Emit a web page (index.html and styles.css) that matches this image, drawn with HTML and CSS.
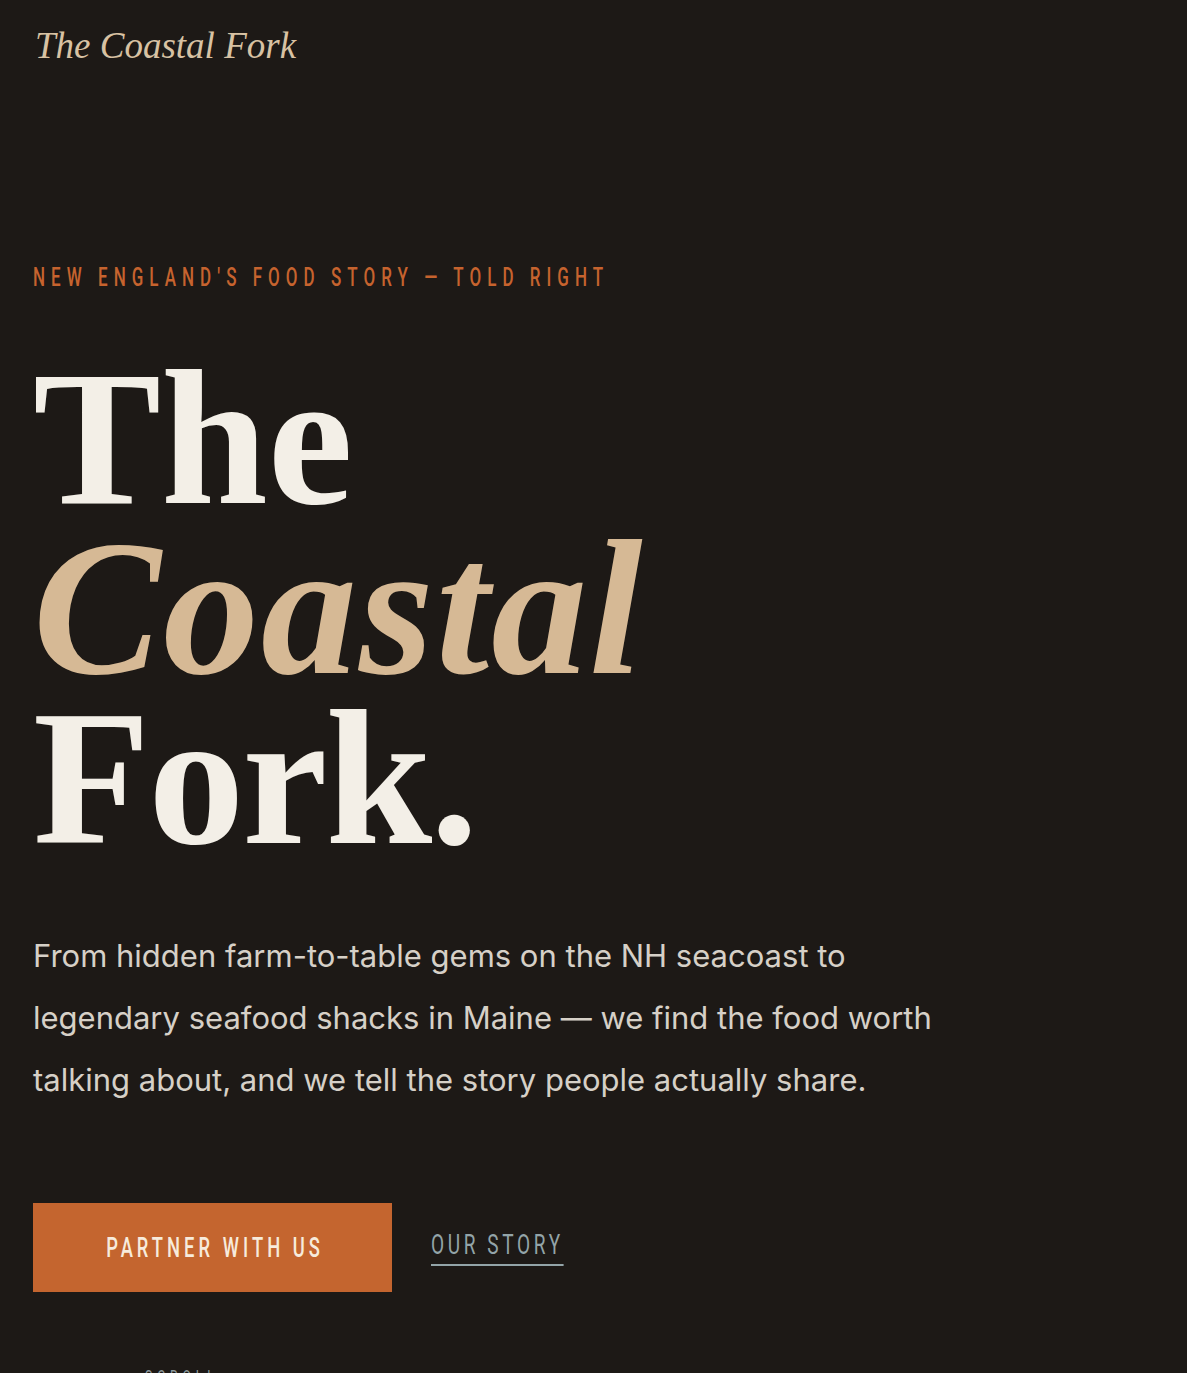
FILE: index.html
```html
<!DOCTYPE html>
<html lang="en">
<head>
<meta charset="utf-8">
<title>The Coastal Fork</title>
<link rel="stylesheet" href="styles.css">
</head>
<body>
<div class="page">
  <header class="site-header">
    <a class="logo" href="#">The Coastal Fork</a>
  </header>
  <section class="hero">
    <p class="eyebrow"><span class="condensed">New England's Food Story — Told Right</span></p>
    <h1 class="title">
      <span class="title-line">The</span>
      <span class="title-line title-accent">Coastal</span>
      <span class="title-line title-tight">Fork.</span>
    </h1>
    <p class="lede">From hidden farm-to-table gems on the NH seacoast to legendary seafood shacks in Maine — we find the food worth talking about, and we tell the story people actually share.</p>
    <div class="actions">
      <a class="btn-primary" href="#"><span class="condensed btn-label">Partner With Us</span></a>
      <a class="link-secondary condensed" href="#">Our Story</a>
    </div>
    <div class="scroll-hint"><span class="condensed">Scroll</span></div>
  </section>
</div>
</body>
</html>
```
FILE: styles.css
```css
html, body {
  margin: 0;
  padding: 0;
  background: #1d1916;
}
body {
  height: 1373px;
  overflow: hidden;
}
.page {
  padding: 0 33px;
}
.condensed {
  display: inline-block;
  font-family: Roboto, "Liberation Sans", sans-serif;
  text-transform: uppercase;
  transform: scaleX(0.68);
  transform-origin: left center;
  white-space: nowrap;
}
.site-header {
  padding-top: 24px;
  height: 60px;
}
.logo {
  font-family: "Liberation Serif", "Times New Roman", serif;
  font-style: italic;
  font-size: 37px;
  line-height: 44px;
  color: #d8c2a3;
  text-decoration: none;
  display: inline-block;
  padding-left: 2px;
}
.hero {
  padding-top: 180px;
}
.eyebrow {
  margin: 0;
  font-size: 25px;
  font-weight: 500;
  line-height: 28px;
  letter-spacing: 0.355em;
  color: #c6632e;
}
.title {
  margin: 62px 0 0;
  font-family: "Liberation Serif", "Times New Roman", serif;
  font-weight: 700;
  font-size: 192px;
  line-height: 170px;
  color: #f3efe7;
}
.title-line {
  display: block;
}
.title-accent {
  font-style: italic;
  color: #d6b995;
  letter-spacing: 2px;
}
.title-tight {
  letter-spacing: -2px;
}
.lede {
  margin: 61px 0 0;
  max-width: 900px;
  font-family: Inter, Roboto, "Liberation Sans", sans-serif;
  font-size: 31px;
  font-weight: 400;
  line-height: 62px;
  color: #d6d0c7;
}
.actions {
  margin-top: 92px;
  display: flex;
  align-items: flex-start;
  gap: 39px;
}
.btn-primary {
  display: flex;
  align-items: center;
  justify-content: center;
  width: 359px;
  height: 89px;
  background: #c4652f;
  text-decoration: none;
}
.btn-label {
  color: #f7ebdc;
  font-size: 27px;
  font-weight: 500;
  letter-spacing: 0.22em;
  transform-origin: center center;
  margin-right: -0.22em;
}
.link-secondary {
  margin-top: 27px;
  color: #93a4a8;
  text-decoration: none;
  font-size: 28px;
  line-height: 30px;
  letter-spacing: 0.19em;
  padding-bottom: 4px;
  border-bottom: 2px solid #93a4a8;
}
.scroll-hint {
  margin: 74px 0 0 112px;
  font-size: 18px;
  letter-spacing: 0.4em;
  color: #8e9a9c;
}
```
